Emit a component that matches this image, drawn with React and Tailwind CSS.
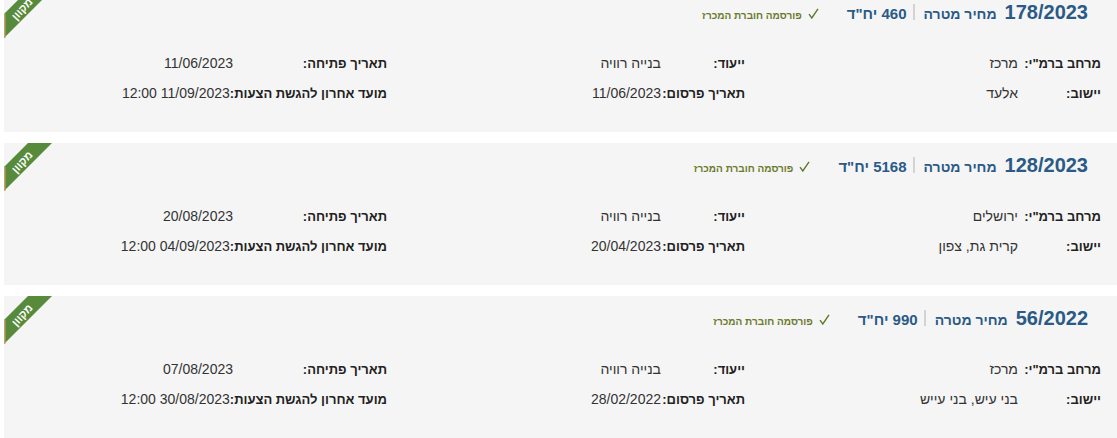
import React from "react";

const cards = [
  {
    id: "178/2023",
    units: "460",
    region: "מרכז",
    purpose: "בנייה רוויה",
    open: "11/06/2023",
    city: "אלעד",
    pub: "11/06/2023",
    deadline: "11/09/2023 12:00",
  },
  {
    id: "128/2023",
    units: "5168",
    region: "ירושלים",
    purpose: "בנייה רוויה",
    open: "20/08/2023",
    city: "קרית גת, צפון",
    pub: "20/04/2023",
    deadline: "04/09/2023 12:00",
  },
  {
    id: "56/2022",
    units: "990",
    region: "מרכז",
    purpose: "בנייה רוויה",
    open: "07/08/2023",
    city: "בני עיש, בני עייש",
    pub: "28/02/2022",
    deadline: "30/08/2023 12:00",
  },
];

function Ribbon() {
  return (
    <svg
      className="absolute left-0 top-0"
      width="60"
      height="60"
      viewBox="0 0 60 60"
    >
      <polygon points="24,0 48,0 0,48 0,24" fill="#578a3a" />
      <rect x="0" y="24" width="1.5" height="24" fill="#c9a066" />
      <text
        x="0"
        y="0"
        transform="translate(18,19) rotate(-48)"
        textAnchor="middle"
        dominantBaseline="central"
        fill="#ffffff"
        fontSize="11"
        fontWeight="bold"
        fontFamily="'Liberation Sans', Arial, sans-serif"
      >
        מקוון
      </text>
    </svg>
  );
}

function Check() {
  return (
    <svg width="11" height="11" viewBox="0 0 11 11" className="mr-[28px] self-center translate-y-[1px]">
      <path d="M1 6.2 L3.8 10 L10 0.8" fill="none" stroke="#5f7a2c" strokeWidth="1.4" />
    </svg>
  );
}

function Cell({ label, value, labelW }) {
  return (
    <div className="flex items-baseline">
      <span className={`text-[13px] font-bold text-[#222222] ${labelW}`}>{label}</span>
      <span className="text-[14px] text-[#333333]">{value}</span>
    </div>
  );
}

function Card({ c }) {
  return (
    <div dir="rtl" className="relative ml-[4px] h-[142px] bg-[#f5f5f5] pt-[10px] pr-[16px]">
      <Ribbon />
      <div className="flex h-[24px] items-baseline pr-[13px] leading-[24px]">
        <span className="text-[20px] font-bold text-[#2a5a86]">{c.id}</span>
        <span className="mr-[8px] text-[14px] font-bold text-[#2a5a86]">מחיר מטרה</span>
        <span className="mr-[9px] ml-[6px] h-[16px] w-[2px] self-center bg-[#d3d3d3]"></span>
        <span className="text-[15px] font-bold text-[#2a5a86]">{c.units} יח"ד</span>
        <Check />
        <span className="mr-[6px] text-[10px] font-bold text-[#6b7b2e]">פורסמה חוברת המכרז</span>
      </div>
      <div className="mt-[29px] flex flex-col gap-[9px] text-[14px] leading-[20px]">
        <div className="flex">
          <div className="w-[356px]">
            <Cell label={'מרחב ברמ"י:'} value={c.region} labelW="min-w-[83px]" />
          </div>
          <div className="w-[358px]">
            <Cell label="ייעוד:" value={c.purpose} labelW="min-w-[84px]" />
          </div>
          <div className="flex-1">
            <Cell label="תאריך פתיחה:" value={c.open} labelW="min-w-[154px]" />
          </div>
        </div>
        <div className="flex">
          <div className="w-[356px]">
            <Cell label="יישוב:" value={c.city} labelW="min-w-[83px]" />
          </div>
          <div className="w-[358px]">
            <Cell label="תאריך פרסום:" value={c.pub} labelW="min-w-[84px]" />
          </div>
          <div className="flex-1">
            <Cell label="מועד אחרון להגשת הצעות:" value={c.deadline} labelW="min-w-[154px]" />
          </div>
        </div>
      </div>
    </div>
  );
}

export default function App() {
  return (
    <div
      className="h-[438px] w-[1117px] overflow-hidden bg-white"
      style={{ fontFamily: "'Liberation Sans', Arial, sans-serif" }}
    >
      <div className="-mt-[10px] flex flex-col gap-[11px]">
        {cards.map((c) => (
          <Card key={c.id} c={c} />
        ))}
      </div>
    </div>
  );
}
